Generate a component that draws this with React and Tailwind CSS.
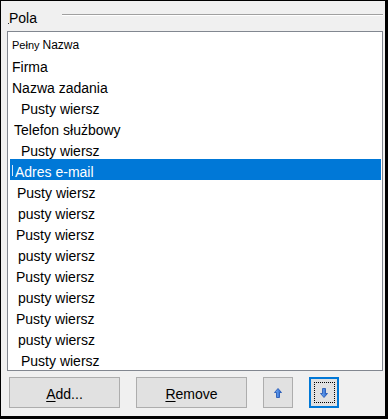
import React from "react";

const rows = [
  { t: "Firma", pl: "pl-[2px]" },
  { t: "Nazwa zadania", pl: "pl-[2px]" },
  { t: "Pusty wiersz", pl: "pl-[11px]" },
  { t: "Telefon służbowy", pl: "pl-[4px]" },
  { t: "Pusty wiersz", pl: "pl-[11px]" },
  { t: "Adres e-mail", pl: "pl-[5px]", sel: true },
  { t: "Pusty wiersz", pl: "pl-[7px]" },
  { t: "pusty wiersz", pl: "pl-[8px]" },
  { t: "Pusty wiersz", pl: "pl-[6px]" },
  { t: "pusty wiersz", pl: "pl-[8px]" },
  { t: "Pusty wiersz", pl: "pl-[6px]" },
  { t: "pusty wiersz", pl: "pl-[8px]" },
  { t: "Pusty wiersz", pl: "pl-[6px]" },
  { t: "pusty wiersz", pl: "pl-[8px]" },
  { t: "Pusty wiersz", pl: "pl-[11px]" },
];

function UpArrow() {
  return (
    <svg width="8" height="10" viewBox="0 0 8 10">
      <defs>
        <linearGradient id="ga" x1="0" y1="0" x2="1" y2="0">
          <stop offset="0" stopColor="#7fb6f4" />
          <stop offset="1" stopColor="#1f5fd0" />
        </linearGradient>
      </defs>
      <polygon points="4,0.5 7.5,4.5 5.5,4.5 5.5,9.5 2.5,9.5 2.5,4.5 0.5,4.5" fill="url(#ga)" stroke="#1a4fb0" strokeWidth="0.8" />
    </svg>
  );
}

function DownArrow() {
  return (
    <svg width="8" height="10" viewBox="0 0 8 10">
      <defs>
        <linearGradient id="gb" x1="0" y1="0" x2="1" y2="0">
          <stop offset="0" stopColor="#7fb6f4" />
          <stop offset="1" stopColor="#1f5fd0" />
        </linearGradient>
      </defs>
      <polygon points="2.5,0.5 5.5,0.5 5.5,5.5 7.5,5.5 4,9.5 0.5,5.5 2.5,5.5" fill="url(#gb)" stroke="#1a4fb0" strokeWidth="0.8" />
    </svg>
  );
}

export default function App() {
  return (
    <div className="w-[388px] h-[419px] box-border bg-[#f0f0f0] border-black border-t border-l border-r-[3px] border-b-[3px] flex flex-col font-['Liberation_Sans',Arial,sans-serif] text-[14px] text-black">
      <div className="h-[30px] flex items-start shrink-0">
        <span className="ml-[7px] mt-[22px] w-px h-px bg-[#333]" />
        <span className="mt-[9px] leading-[16px]">Pola</span>
        <div className="ml-auto mr-[2px] mt-[13px] w-[321px] h-[2px] border-t border-[#a0a0a0] border-b border-b-white box-border" />
      </div>
      <div className="ml-[6px] w-[376px] h-[340px] shrink-0 box-border border border-[#828790] bg-white pt-[1px] pl-[2px] pr-[1px] overflow-hidden">
        <div className="h-[21px] pl-[2px] pt-[4px] leading-[16px] flex items-baseline">
          <span className="text-[11px]">Pełny</span>
          <span className="text-[12px] ml-[3px]">Nazwa</span>
        </div>
        {rows.map((r, i) => (
          <div
            key={i}
            className={
              "relative h-[21px] pt-[5px] leading-[16px] whitespace-pre " +
              r.pl +
              (r.sel ? " bg-[#0078d7] text-white" : "")
            }
          >
            {r.sel && <span className="absolute left-[2px] top-[6px] w-px h-[11px] bg-[#d6e8fa]" />}
            {r.t}
          </div>
        ))}
      </div>
      <div className="mt-[6px] pl-[8px] flex gap-4 shrink-0">
        <div className="w-[111px] h-[31px] box-border border border-[#adadad] bg-[#e1e1e1] flex items-center justify-center pt-[3px] leading-[16px]">
          <span><span className="underline underline-offset-2">A</span>dd...</span>
        </div>
        <div className="w-[111px] h-[31px] box-border border border-[#adadad] bg-[#e1e1e1] flex items-center justify-center pt-[3px] leading-[16px]">
          <span><span className="underline underline-offset-2">R</span>emove</span>
        </div>
        <div className="w-[30px] h-[31px] box-border border border-[#adadad] bg-[#e1e1e1] flex items-center justify-center">
          <UpArrow />
        </div>
        <div className="w-[30px] h-[31px] box-border border-2 border-[#0078d7] bg-[#e1e1e1] flex items-center justify-center">
          <div className="w-[21px] h-[21px] box-border border border-dotted border-black flex items-center justify-center">
            <DownArrow />
          </div>
        </div>
      </div>
    </div>
  );
}
